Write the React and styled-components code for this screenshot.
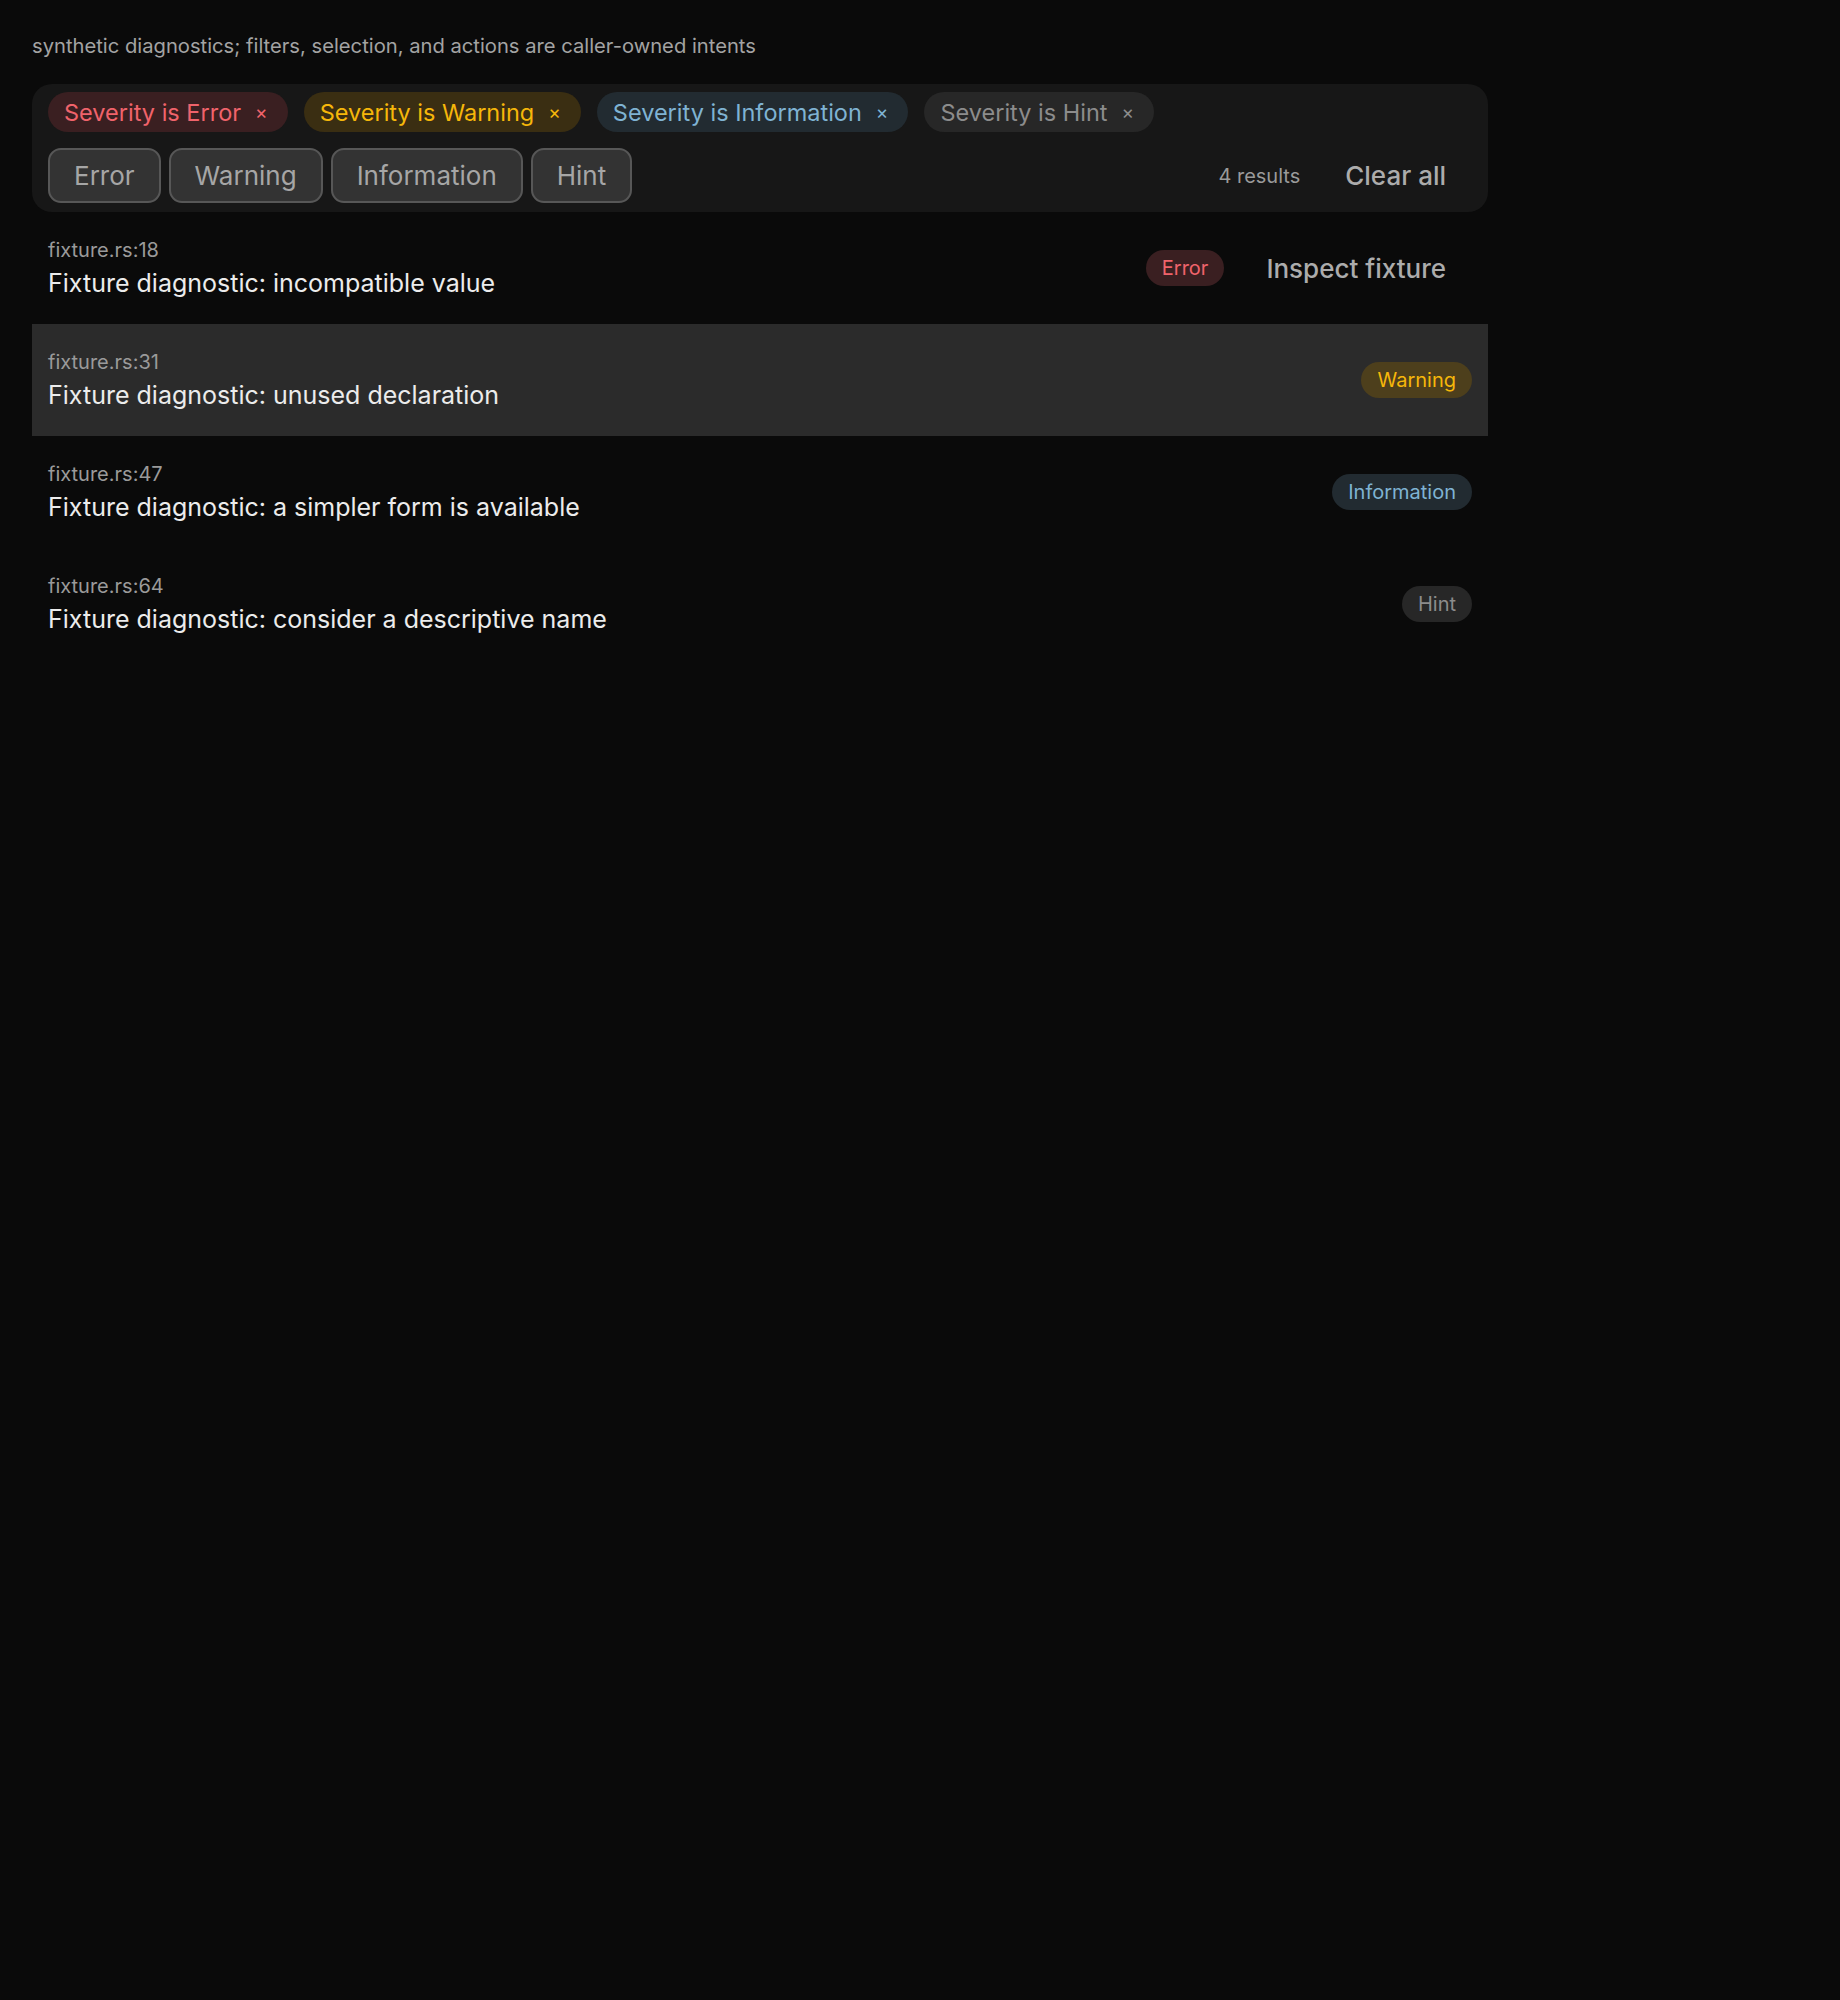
import React from 'react';
import styled, { createGlobalStyle } from 'styled-components';

const GlobalStyle = createGlobalStyle`
  body {
    margin: 0;
    background: #0a0a0a;
    font-family: Inter, "Noto Sans", sans-serif;
    color: #e6e6e6;
  }
`;

const severities = {
  Error: { fg: '#f0636b', bg: '#3a1f21' },
  Warning: { fg: '#f6b70a', bg: '#3a2e12' },
  Information: { fg: '#7fb3d3', bg: '#222b31' },
  Hint: { fg: '#8c8c8c', bg: '#272727' },
};

const diagnostics = [
  { loc: 'fixture.rs:18', message: 'Fixture diagnostic: incompatible value', severity: 'Error', action: 'Inspect fixture' },
  { loc: 'fixture.rs:31', message: 'Fixture diagnostic: unused declaration', severity: 'Warning', selected: true },
  { loc: 'fixture.rs:47', message: 'Fixture diagnostic: a simpler form is available', severity: 'Information' },
  { loc: 'fixture.rs:64', message: 'Fixture diagnostic: consider a descriptive name', severity: 'Hint' },
];

const Page = styled.div`
  padding: 32px 32px;
  width: 1456px;
`;

const Caption = styled.p`
  margin: 0 0 24px;
  font-size: 20.2px;
  line-height: 28px;
  color: #a3a3a3;
`;

const FilterPanel = styled.div`
  background: #171717;
  border-radius: 20px;
  padding: 8px 16px 9px;
  display: flex;
  flex-direction: column;
  gap: 16px;
`;

const ChipRow = styled.div`
  display: flex;
  gap: 16px;
`;

const Chip = styled.span`
  display: inline-flex;
  align-items: center;
  gap: 14px;
  height: 40px;
  padding: 0 20px 0 16px;
  border-radius: 20px;
  font-size: 23.5px;
  color: ${(p) => severities[p.$severity].fg};
  background: ${(p) => severities[p.$severity].bg};
`;

const ChipClose = styled.span`
  font-size: 19px;
  line-height: 1;
`;

const Toolbar = styled.div`
  display: flex;
  align-items: center;
  gap: 8px;
`;

const ToggleButton = styled.button`
  height: 55px;
  padding: 0 24px;
  background: #333333;
  border: 2px solid #575757;
  border-radius: 13px;
  color: #a6a6a6;
  font-family: inherit;
  font-size: 26px;
`;

const ResultCount = styled.span`
  margin-left: auto;
  margin-right: 11px;
  font-size: 20px;
  color: #9a9a9a;
`;

const TextButton = styled.button`
  background: none;
  border: none;
  padding: 0 26px;
  height: 48px;
  color: #acacac;
  font-family: inherit;
  font-size: 26px;
  font-weight: 500;
`;

const List = styled.div`
  display: flex;
  flex-direction: column;
`;

const Row = styled.div`
  height: 112px;
  box-sizing: border-box;
  padding: 0 16px;
  display: flex;
  align-items: center;
  gap: 16px;
  background: ${(p) => (p.$selected ? '#2b2b2b' : 'transparent')};
`;

const RowText = styled.div`
  flex: 1;
  display: flex;
  flex-direction: column;
  gap: 5px;
`;

const Location = styled.span`
  font-size: 20px;
  line-height: 24px;
  color: #9a9a9a;
`;

const Message = styled.span`
  font-size: 25px;
  line-height: 32px;
  color: #ececec;
`;

const Badge = styled.span`
  display: inline-flex;
  align-items: center;
  height: 36px;
  padding: 0 16px;
  border-radius: 18px;
  font-size: 20px;
  color: ${(p) => severities[p.$severity].fg};
  background: ${(p) => (p.$selected ? '#4d3f1c' : severities[p.$severity].bg)};
`;

export default function App() {
  return (
    <>
      <GlobalStyle />
      <Page>
        <Caption>synthetic diagnostics; filters, selection, and actions are caller-owned intents</Caption>
        <FilterPanel>
          <ChipRow>
            {Object.keys(severities).map((s) => (
              <Chip key={s} $severity={s}>
                Severity is {s}
                <ChipClose>×</ChipClose>
              </Chip>
            ))}
          </ChipRow>
          <Toolbar>
            {Object.keys(severities).map((s) => (
              <ToggleButton key={s}>{s}</ToggleButton>
            ))}
            <ResultCount>4 results</ResultCount>
            <TextButton>Clear all</TextButton>
          </Toolbar>
        </FilterPanel>
        <List>
          {diagnostics.map((d) => (
            <Row key={d.loc} $selected={d.selected}>
              <RowText>
                <Location>{d.loc}</Location>
                <Message>{d.message}</Message>
              </RowText>
              <Badge $severity={d.severity} $selected={d.selected}>{d.severity}</Badge>
              {d.action && <TextButton>{d.action}</TextButton>}
            </Row>
          ))}
        </List>
      </Page>
    </>
  );
}
